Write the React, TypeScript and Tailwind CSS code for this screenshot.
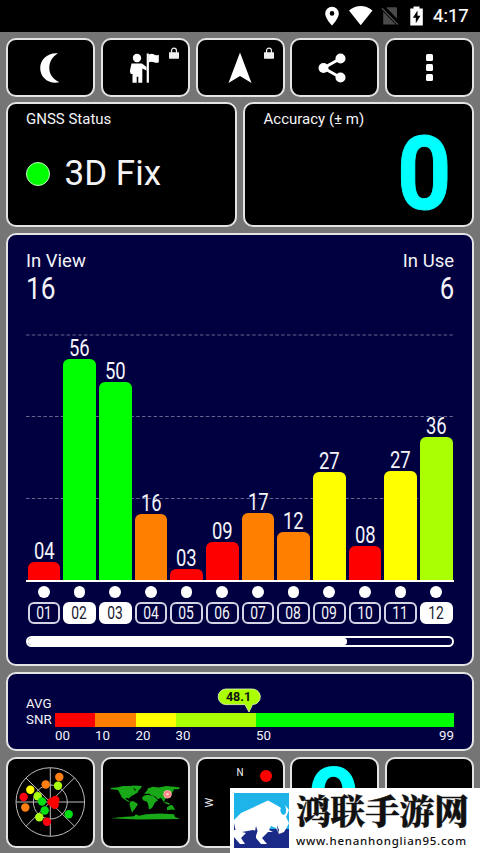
import type { ReactNode } from "react";
import clsx from "clsx";

const satellites = [
  { id: "01", snr: "04", height: 18, color: "bg-[#ff0000]" },
  { id: "02", snr: "56", height: 221, color: "bg-[#00ff00]", used: true },
  { id: "03", snr: "50", height: 198, color: "bg-[#00ff00]", used: true },
  { id: "04", snr: "16", height: 66, color: "bg-[#ff8000]" },
  { id: "05", snr: "03", height: 11, color: "bg-[#ff0000]" },
  { id: "06", snr: "09", height: 38, color: "bg-[#ff0000]" },
  { id: "07", snr: "17", height: 67, color: "bg-[#ff8000]" },
  { id: "08", snr: "12", height: 48, color: "bg-[#ff8000]" },
  { id: "09", snr: "27", height: 108, color: "bg-[#ffff00]" },
  { id: "10", snr: "08", height: 34, color: "bg-[#ff0000]" },
  { id: "11", snr: "27", height: 109, color: "bg-[#ffff00]" },
  { id: "12", snr: "36", height: 143, color: "bg-[#aaff00]", used: true },
];

const skyDots = [
  { x: 59.3, y: 777, color: "#ff8010" },
  { x: 45.7, y: 784.5, color: "#ff8010" },
  { x: 58, y: 785.8, color: "#aaff10" },
  { x: 30.3, y: 789.7, color: "#ffff00" },
  { x: 23.7, y: 797, color: "#ff0010" },
  { x: 37.7, y: 796.3, color: "#aaff10" },
  { x: 25.3, y: 807.5, color: "#ff8010" },
  { x: 42, y: 801.5, color: "#00e010" },
  { x: 44.7, y: 810.5, color: "#00e010" },
  { x: 39.3, y: 817.3, color: "#aaff10" },
  { x: 47, y: 821.7, color: "#ff0010" },
  { x: 68.7, y: 814.3, color: "#00e010" },
  { x: 51.5, y: 802, color: "#ff0000" },
  { x: 55.3, y: 800, color: "#ff0000" },
  { x: 54.7, y: 804.7, color: "#ff0000" },
];

function Panel({ className, children }: { className?: string; children?: ReactNode }) {
  return (
    <div className={clsx("relative rounded-[10px] border-2 border-[#e4e4e4]", className)}>
      {children}
    </div>
  );
}

function Lock() {
  return (
    <svg className="absolute top-[7px] right-[8px]" width="12" height="13" viewBox="0 0 12 13">
      <path d="M3.5 6V4a2.5 2.8 0 0 1 5 0v2" fill="none" stroke="#eee" strokeWidth="1.2" />
      <rect x="1" y="5.3" width="10" height="6.4" rx=".6" fill="#eee" />
    </svg>
  );
}

function StatusBar() {
  return (
    <div className="flex h-8 items-center bg-black pl-[325px] text-white">
      <svg width="110" height="32" viewBox="325 0 110 32" fill="#fff" className="shrink-0">
        <path
          fillRule="evenodd"
          d="M332 6.700a6.800 6.800 0 0 0-6.800 6.800c0 5 6.800 12 6.800 12s6.800-7 6.800-12a6.800 6.800 0 0 0-6.800-6.800zm0 4.400a2.300 2.300 0 1 1 0 4.600 2.300 2.300 0 0 1 0-4.600z"
        />
        <path d="M349 10.400Q360.700 1.800 372.500 10.400L360.700 25.200z" />
        <path d="M386.600 8L397 18.500V8.500Q397 7.200 395.700 7.200H387.200zM383.200 11.800V24.500H395.800z" fill="#4a4a4a" />
        <path d="M382 8.200L397.800 24.500" stroke="#4a4a4a" strokeWidth="1.500" />
        <path d="M413.500 6.500h6v2h3.300v17h-12.500v-17h3.200z" />
        <path d="M417.500 10.500L412.800 17.800h3v5.500L420.500 15.800h-3z" fill="#000" />
      </svg>
      <span className="-ml-[2px] text-[18.500px] leading-[34px] whitespace-nowrap [-webkit-text-stroke:.2px_white]">
        4:17
      </span>
    </div>
  );
}

function Toolbar() {
  return (
    <div className="grid h-[59px] grid-cols-5 gap-[5.750px]">
      <Panel className="flex items-center justify-center bg-black">
        <svg width="24" height="34" viewBox="38 50 24 34" className="-ml-[2px]">
          <path d="M58 52.300C47 51.500 40.200 59 40.200 67C40.200 76 48 83.500 59.300 81.300C52 77.500 49.300 72.500 49.300 67C49.300 61 52 56 58 52.300z" fill="#fff" />
        </svg>
      </Panel>
      <Panel className="flex items-center justify-center bg-black">
        <svg width="32" height="32" viewBox="130 51 32 32" fill="#fff">
          <circle cx="138" cy="57" r="4.200" />
          <path d="M132.500 62.500h10.500l4.500 3.500v3.500l-4.200-2v14.200h-4v-6h-1.600v6h-4.200V73h-1.800l-.8-3z" />
          <path d="M147.700 52.500h2.200v29.200h-2.200z" />
          <path d="M150 53.500q3-1.500 5 0t4.800.2v7.500q-2.500 1-4.800 0t-5 0z" />
        </svg>
        <Lock />
      </Panel>
      <Panel className="flex items-center justify-center bg-black">
        <svg width="26" height="34" viewBox="0 0 26 34">
          <path d="M13 1.500L24.500 32L13 25L1.500 32z" fill="#fff" />
        </svg>
        <Lock />
      </Panel>
      <Panel className="flex items-center justify-center bg-black">
        <svg width="30" height="32" viewBox="0 0 30 32" fill="#fff" className="-ml-[3px]">
          <path d="M22.500 6.500L5.500 16L22.500 25.500" fill="none" stroke="#fff" strokeWidth="3" />
          <circle cx="22.500" cy="6.500" r="5" />
          <circle cx="5.500" cy="16" r="5" />
          <circle cx="22.500" cy="25.500" r="5" />
        </svg>
      </Panel>
      <Panel className="flex flex-col items-center justify-center gap-[3.500px] bg-black">
        <i className="size-[6.500px] rounded-[1.500px] bg-white" />
        <i className="size-[6.500px] rounded-[1.500px] bg-white" />
        <i className="size-[6.500px] rounded-[1.500px] bg-white" />
      </Panel>
    </div>
  );
}

function SatelliteChart() {
  return (
    <Panel className="h-[433px] bg-[#000040] px-[18px] pt-[15px]">
      <div className="flex justify-between">
        <div>
          <div className="text-[18.500px] leading-[22px]">In View</div>
          <div className="h-[34px] origin-left scale-x-[.85] text-[31px] leading-[34px]">16</div>
        </div>
        <div className="text-right">
          <div className="text-[18.500px] leading-[22px]">In Use</div>
          <div className="h-[34px] origin-right scale-x-[.83] text-[31px] leading-[34px]">6</div>
        </div>
      </div>

      {/* Bars */}
      <div className="relative mt-[28px] h-[248px] border-b-2 border-white">
        <svg className="absolute inset-0" width="428" height="246" fill="none">
          <path d="M0 1H428M0 82.500H428M0 164.500H428" stroke="#66668c" strokeDasharray="3.500 2.300" />
        </svg>
        <div className="relative grid h-full grid-cols-12 items-end">
          {satellites.map((sat) => (
            <div key={sat.id} className="px-[1.500px]">
              <div className="h-[23px] scale-x-[.77] text-center text-[24px] leading-[24px]">
                {sat.snr}
              </div>
              <div className={clsx("rounded-t-[6px]", sat.color)} style={{ height: sat.height }} />
            </div>
          ))}
        </div>
      </div>

      {/* Satellite ids */}
      <div className="mt-[4px] grid grid-cols-12">
        {satellites.map((sat) => (
          <div key={sat.id} className="flex flex-col items-center px-[1.500px]">
            <i className="size-[11.500px] rounded-full bg-white" />
            <div
              className={clsx(
                "mt-[4.500px] flex h-[22px] w-full items-center justify-center rounded-[6px] border-2 text-[18px]",
                sat.used ? "border-white bg-white text-[#202030]" : "border-[#d4d4e4]"
              )}
            >
              <span className="-mt-[1px] scale-x-[.77]">{sat.id}</span>
            </div>
          </div>
        ))}
      </div>

      <div className="mt-[12px] h-[11px] overflow-hidden rounded-full border-2 border-white">
        <div className="h-full w-[319px] rounded-r-[3px] bg-white" />
      </div>
    </Panel>
  );
}

function SnrPanel() {
  return (
    <Panel className="h-[79px] bg-[#000040] pt-[22px] pl-[18px] text-[13.300px]">
      <div className="leading-[16px]">AVG</div>
      <div className="flex h-[15px] items-center">
        <span className="w-[29px] leading-[15px]">SNR</span>
        <i className="h-[14px] w-[40px] bg-[#ff0000]" />
        <i className="h-[14px] w-[40.500px] bg-[#ff8000]" />
        <i className="h-[14px] w-[40px] bg-[#ffff00]" />
        <i className="h-[14px] w-[80.500px] bg-[#aaff00]" />
        <i className="h-[14px] w-[198px] bg-[#00ff00]" />
      </div>
      <div className="mt-[1px] ml-[29px] flex leading-[16px]">
        <span className="w-[40px]">00</span>
        <span className="w-[40.500px]">10</span>
        <span className="w-[40px]">20</span>
        <span className="w-[80.500px]">30</span>
        <span>50</span>
        <span className="mr-[18px] ml-auto">99</span>
      </div>
      <svg className="absolute top-[14px] left-[207.500px]" width="48" height="26" viewBox="0 0 48 26">
        <path d="M10 1H36.500a7.800 7.800 0 0 1 0 15.600H36.500L33 24L29 16.600H10A7.800 7.800 0 0 1 10 1z" fill="#aaff00" stroke="#e8ffc0" strokeWidth=".8" />
        <text x="22.500" y="13.300" textAnchor="middle" fontSize="12.500" fontWeight="700" fill="#101010">
          48.1
        </text>
      </svg>
    </Panel>
  );
}

function SkyView() {
  return (
    <svg width="85" height="87" viewBox="8 759 85 87">
      <g fill="none" stroke="#bbb" strokeWidth="1">
        <circle cx="50.300" cy="802" r="34.300" />
        <circle cx="50.300" cy="802" r="17" />
        <path d="M16 802H84.600M50.300 768V836M26 778L74.600 826.300M74.600 777.700L26 826.300" />
      </g>
      {skyDots.map((dot, i) => (
        <circle key={i} cx={dot.x} cy={dot.y} r="4.200" fill={dot.color} />
      ))}
    </svg>
  );
}

function WorldMap() {
  return (
    <svg width="85" height="87" viewBox="103 759 85 87">
      <g fill="#18a818" transform="translate(0 168.200) scale(1 .786)">
        <path d="M110.500 788.500L118 787.500L123 786L130 786L133 788L135 792L139 789L138 794L134 797L131 799L129 802L127 801L125 802L130 806L128 806L122 801L120 796L118 791L111 790z" />
        <path d="M127 786.500L134 785.500L142 786L140 790L137 792L134 789z" />
        <path d="M130 806L133 805L138 809L136 813L133 818L132 820L130.500 814L129.500 810z" />
        <path d="M144 796L147 792L148 789L153 787L159 788L166 786L174 787L180 788L179 790L174 790L172 795L168 800L165 803L164 807L161 801L158 803L155 799L152 798L149 796z" />
        <path d="M144 798L148 797L154 799L158 804L155 807L152 814L149 816L148 809L147 806L143 804L142 801z" />
        <path d="M164 806L170 808L169 810L165 808zM167 813L171 810L173 811L175 817L172 816L167 817z" />
        <path d="M111 827L122 825.500L134 824.500L136 822L139 824L146 822L160 821L174 822L175 825.500L180 828L138 828.500z" />
      </g>
      <circle cx="167.500" cy="794.300" r="3.800" fill="#ff8080" stroke="#ffb0b0" strokeWidth="1" />
      <circle cx="167.500" cy="794.300" r="1.300" fill="#ffd0d0" />
    </svg>
  );
}

function Watermark() {
  return (
    <div className="absolute right-0 bottom-0 flex h-[65px] w-[250px] bg-white pt-[5px] pl-[3.500px]">
      <svg width="55" height="55" viewBox="0 0 55 55" className="shrink-0">
        <path d="M0 0H55V55H0z" fill="#1eb4e9" />
        <path d="M0 36H55V55H0z" fill="#1a2a86" />
        <path d="M0 27L7 20L18 15L34 7.500L44 13L47 15Q45 19 49 22Q54 21 51 12L55 17L52 24L55 30L53 34L50 39L45 41L42 35L37 33L35 37L39 39H34L28 45L33 51H27L22 45V38L19 37L8 39L12 40L7 45L11 51H6L0 44z" fill="#fff" />
        <path d="M0 30L1.500 37H0zM22 33L23.500 38L22 43V50L26 51H20L18 44V39L13 41L16 38L21 38z" fill="#1a2a86" />
        <path d="M43 32L45 37L44 40z" fill="#1a2a86" />
      </svg>
      <div className="ml-[7.500px] flex flex-col whitespace-nowrap text-[#111]">
        <div className="-mt-[4px] h-[42px] font-['Noto_Serif_CJK_SC','Noto_Sans_CJK_SC',serif] text-[34.600px] leading-[40px] font-black [-webkit-text-stroke:.4px_#111]">
          鸿联手游网
        </div>
        <div className="mt-[1px] font-['Noto_Sans',sans-serif] text-[11.500px] leading-[17px] font-medium tracking-[.740px]">
          www.henanhonglian95.com
        </div>
      </div>
    </div>
  );
}

export default function App() {
  return (
    <div className="relative h-[853px] w-[480px] overflow-hidden bg-[#757575] font-['Roboto',sans-serif] text-[#f4f4f8]">
      <StatusBar />
      <div className="flex flex-col gap-[6px] px-[6px] pt-[6px]">
        <Toolbar />

        <div className="-mt-[1px] grid h-[125px] grid-cols-2 gap-[6px]">
          <Panel className="bg-black px-[18px] pt-[5px]">
            <div className="text-[15px] leading-[20px]">GNSS Status</div>
            <div className="mt-[24px] flex items-center">
              <i className="size-[24px] rounded-full border border-[#c0ffc0] bg-[#00ff00]" />
              <span className="ml-[14.500px] text-[35px] leading-[42px]">3D Fix</span>
            </div>
          </Panel>
          <Panel className="bg-black px-[18.500px] pt-[5px]">
            <div className="text-[15px] leading-[20px]">Accuracy (± m)</div>
            <div className="absolute top-[10px] right-[20px] origin-right scale-x-[.93] text-[102px] leading-[120px] font-bold text-[#00ffff] [-webkit-text-stroke:1px_#00ffff]">
              0
            </div>
          </Panel>
        </div>

        <SatelliteChart />
        <SnrPanel />

        <div className="grid h-[91px] grid-cols-5 gap-[5.750px]">
          <Panel className="bg-black">
            <SkyView />
          </Panel>
          <Panel className="bg-black">
            <WorldMap />
          </Panel>
          <Panel className="bg-black text-[11px] leading-none">
            <span className="absolute top-[8px] left-[38px] scale-x-90">N</span>
            <span className="absolute top-[38px] left-[7px] -rotate-90">W</span>
            <i className="absolute top-[11px] left-[62px] size-[12px] rounded-full bg-[#ff0000]" />
          </Panel>
          <Panel className="overflow-hidden bg-black text-center">
            <div className="mt-[-3px] -ml-[2px] scale-x-[.95] text-[98px] leading-[96px] font-bold text-[#00ffff]">0</div>
          </Panel>
          <Panel className="bg-black" />
        </div>
      </div>
      <Watermark />
    </div>
  );
}
